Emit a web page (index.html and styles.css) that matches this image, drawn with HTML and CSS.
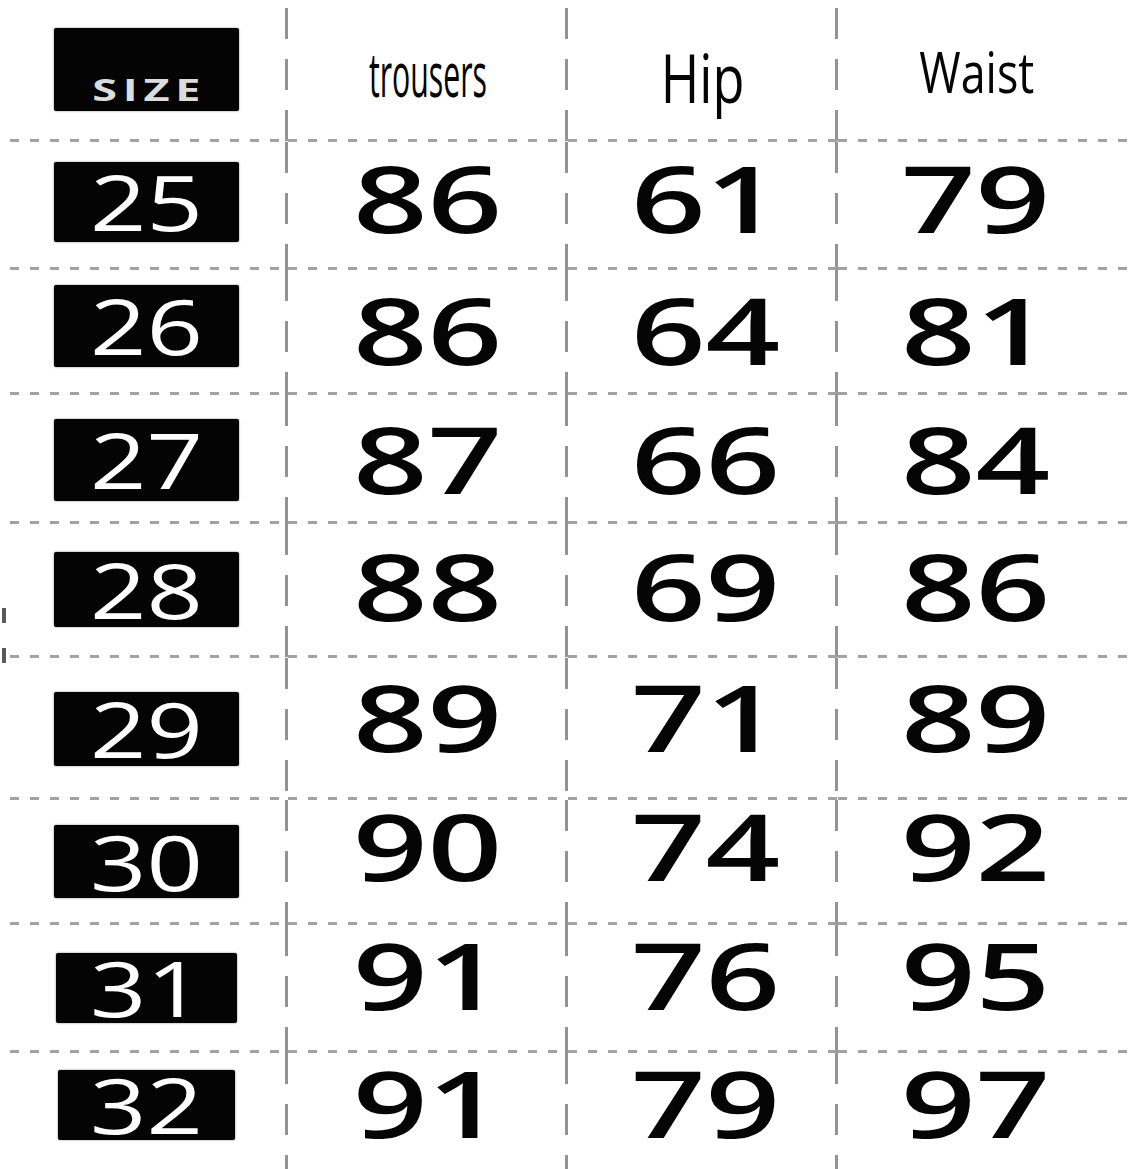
FILE: index.html
```html
<!DOCTYPE html>
<html lang="en">
<head>
<meta charset="utf-8">
<title>Size chart</title>
<link rel="stylesheet" href="styles.css">
</head>
<body>
<div class="chart">
  <div class="cell size head"><span class="tag tag-head"><span class="tag-label">SIZE</span></span></div>
  <div class="cell th th-trousers"><span class="th-text">trousers</span></div>
  <div class="cell th th-hip"><span class="th-text">Hip</span></div>
  <div class="cell th th-waist last-col"><span class="th-text">Waist</span></div>

  <div class="cell size row-25"><span class="tag"><span class="tag-num">25</span></span></div>
  <div class="cell val c2 row-25"><span class="num">86</span></div>
  <div class="cell val c3 row-25"><span class="num">61</span></div>
  <div class="cell val c4 last-col row-25"><span class="num">79</span></div>

  <div class="cell size row-26"><span class="tag"><span class="tag-num">26</span></span></div>
  <div class="cell val c2 row-26"><span class="num">86</span></div>
  <div class="cell val c3 row-26"><span class="num">64</span></div>
  <div class="cell val c4 last-col row-26"><span class="num">81</span></div>

  <div class="cell size row-27"><span class="tag"><span class="tag-num">27</span></span></div>
  <div class="cell val c2 row-27"><span class="num">87</span></div>
  <div class="cell val c3 row-27"><span class="num">66</span></div>
  <div class="cell val c4 last-col row-27"><span class="num">84</span></div>

  <div class="cell size row-28"><span class="tag"><span class="tag-num">28</span></span></div>
  <div class="cell val c2 row-28"><span class="num">88</span></div>
  <div class="cell val c3 row-28"><span class="num">69</span></div>
  <div class="cell val c4 last-col row-28"><span class="num">86</span></div>

  <div class="cell size row-29"><span class="tag"><span class="tag-num">29</span></span></div>
  <div class="cell val c2 row-29"><span class="num">89</span></div>
  <div class="cell val c3 row-29"><span class="num">71</span></div>
  <div class="cell val c4 last-col row-29"><span class="num">89</span></div>

  <div class="cell size row-30"><span class="tag"><span class="tag-num">30</span></span></div>
  <div class="cell val c2 row-30"><span class="num">90</span></div>
  <div class="cell val c3 row-30"><span class="num">74</span></div>
  <div class="cell val c4 last-col row-30"><span class="num">92</span></div>

  <div class="cell size row-31"><span class="tag"><span class="tag-num">31</span></span></div>
  <div class="cell val c2 row-31"><span class="num">91</span></div>
  <div class="cell val c3 row-31"><span class="num">76</span></div>
  <div class="cell val c4 last-col row-31"><span class="num">95</span></div>

  <div class="cell size last-row row-32"><span class="tag"><span class="tag-num">32</span></span></div>
  <div class="cell val c2 last-row row-32"><span class="num">91</span></div>
  <div class="cell val c3 last-row row-32"><span class="num">79</span></div>
  <div class="cell val c4 last-col last-row row-32"><span class="num">97</span></div>

  <span class="edge-mark edge-mark-a"></span>
  <span class="edge-mark edge-mark-b"></span>
</div>
</body>
</html>
```

FILE: styles.css
```css
html, body {
  margin: 0;
  padding: 0;
  background: #ffffff;
}

body {
  font-family: "Open Sans", "Liberation Sans", sans-serif;
  color: #050505;
}

.chart {
  position: relative;
  width: 1129px;
  height: 1169px;
  display: grid;
  grid-template-columns: 288px 280px 270px 1fr;
  grid-template-rows: 142px 128px 125px 129px 134px 142px 125px 128px 116px;
  overflow: hidden;
}

.cell {
  display: flex;
  align-items: center;
  justify-content: center;
  box-sizing: border-box;
  background-image:
    repeating-linear-gradient(to right, #a2a2a2 0 9px, transparent 9px 20px),
    repeating-linear-gradient(to bottom, #939393 0 31px, transparent 31px 51px);
  background-repeat: no-repeat, no-repeat;
  background-size: 100% 3px, 3px 100%;
  background-position: 0 100%, 100% 0;
}

.cell.size {
  background-size: calc(100% - 10px) 3px, 3px 100%;
  background-position: 10px 100%, 100% 0;
}

.cell.head,
.cell.th {
  background-size: 100% 3px, 3px calc(100% - 8px);
  background-position: 0 100%, 100% 8px;
}

.cell.size.head {
  background-size: calc(100% - 10px) 3px, 3px calc(100% - 8px);
  background-position: 10px 100%, 100% 8px;
}

.cell.last-col {
  background-size: 100% 3px, 0 0;
}

.cell.last-row {
  background-size: 0 0, 3px 100%;
}

.cell.last-row.last-col {
  background-size: 0 0, 0 0;
}

/* size tags */
.size {
  padding-left: 5px;
}

.tag {
  width: 185px;
  height: 78px;
  background: #040404;
  border-radius: 2px;
  box-shadow: 0 0 2px rgba(0, 0, 0, 0.55);
  display: flex;
  align-items: center;
  justify-content: center;
}

.tag-head {
  height: 83px;
  align-items: flex-end;
  padding-bottom: 6px;
  box-sizing: border-box;
}

.cell.head {
  padding-bottom: 4px;
}

.tag-label {
  display: inline-block;
  font-family: "Open Sans", "Liberation Sans", sans-serif;
  font-weight: 700;
  font-size: 31px;
  line-height: 1;
  letter-spacing: 4px;
  padding-left: 4px;
  color: #dcdcdc;
  transform: scaleX(1.45);
}

.tag-num {
  display: inline-block;
  font-weight: 500;
  font-size: 76px;
  line-height: 1;
  color: #ffffff;
  transform: scaleX(1.3);
}

/* header titles */
.th-text {
  display: inline-block;
  font-weight: 400;
  line-height: 1;
  color: #050505;
}

.th-trousers {
  padding-top: 3px;
}

.th-trousers .th-text {
  font-size: 63px;
  transform: scaleX(0.48);
}

.th-hip {
  padding-top: 12px;
}

.th-hip .th-text {
  font-size: 67px;
  transform: scaleX(0.78);
}

.th-waist {
  padding-right: 14px;
}

.th-waist .th-text {
  font-size: 56px;
  transform: scaleX(0.8);
}

/* values */
.c3 {
  padding-left: 6px;
}

.c4 {
  padding-right: 16px;
}

.num {
  display: inline-block;
  font-weight: 600;
  font-size: 92px;
  line-height: 1;
  color: #050505;
  transform: scaleX(1.42);
}

/* per-row vertical placement */
.val.row-25 { padding-bottom: 17px; }
.val.row-26 { padding-bottom: 6px; }
.val.row-27 { padding-bottom: 2px; }
.val.row-28 { padding-bottom: 11px; }
.val.row-29 { padding-bottom: 24px; }
.val.row-30 { padding-bottom: 33px; }
.val.row-31 { padding-bottom: 29px; }
.val.row-32 { padding-bottom: 17px; }

.size.row-25 { padding-bottom: 8px; }
.size.row-26 { padding-bottom: 13px; }
.size.row-27 { padding-bottom: 0; }
.size.row-28 { padding-bottom: 3px; }
.size.row-29 { padding-bottom: 0; }
.size.row-30 { padding-bottom: 2px; }
.size.row-31 { padding-bottom: 2px; }
.size.row-32 { padding-bottom: 12px; }

.row-25 .tag { height: 80px; }
.row-26 .tag { height: 82px; }
.row-27 .tag { height: 82px; }
.row-28 .tag { height: 75px; }
.row-29 .tag { height: 74px; }
.row-30 .tag { height: 73px; }
.row-31 .tag { height: 70px; width: 181px; }
.row-32 .tag { height: 70px; width: 177px; }

/* stray scan marks on the left edge */
.edge-mark {
  position: absolute;
  left: 2px;
  width: 4px;
  height: 15px;
  background: #5a5a5a;
}

.edge-mark-a {
  top: 608px;
}

.edge-mark-b {
  top: 648px;
}
```
